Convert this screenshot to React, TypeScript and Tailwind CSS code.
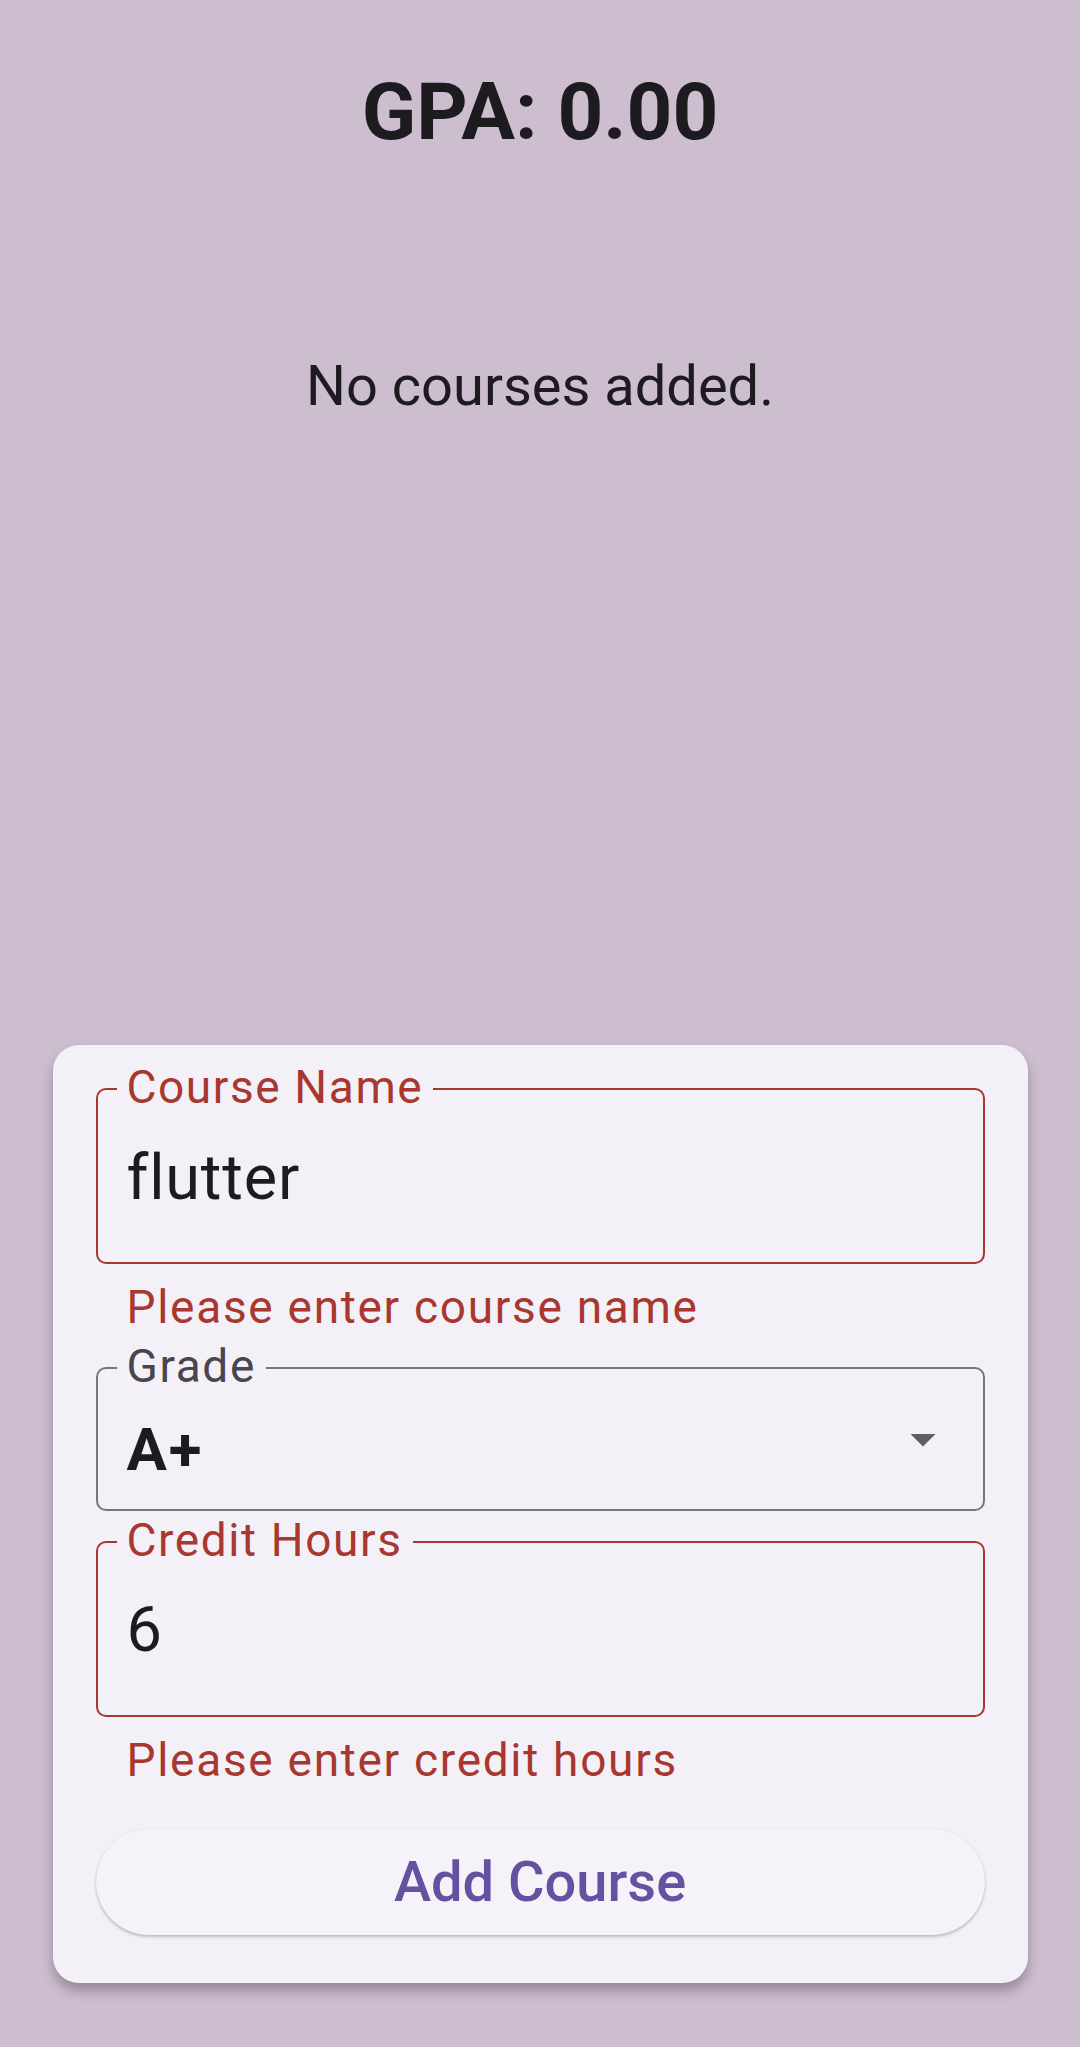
import React from "react";

// Outlined text field with floating label sitting on the border
function OutlinedField({
  label,
  tone = "error",
  className = "",
  children,
}: {
  label: string;
  tone?: "error" | "neutral";
  className?: string;
  children: React.ReactNode;
}) {
  const border = tone === "error" ? "border-[#a8382f]" : "border-[#79747e]";
  const labelColor = tone === "error" ? "text-[#a8382f]" : "text-[#49454f]";
  return (
    <div
      className={`relative flex items-center rounded-[10px] border-2 pl-[29px] pr-[30px] ${border} ${className}`}
    >
      <span
        className={`absolute left-[19px] top-[-26px] bg-[#f4f0f8] px-[10px] text-[46px] leading-none tracking-[1.6px] ${labelColor}`}
      >
        {label}
      </span>
      {children}
    </div>
  );
}

function ErrorText({ children }: { children: React.ReactNode }) {
  return (
    <p className="mt-[16px] pl-[31px] text-[46px] leading-[54px] tracking-[1.7px] text-[#a8382f]">
      {children}
    </p>
  );
}

export default function App() {
  return (
    <div className="flex h-[2047px] w-full flex-col items-center bg-[#ccbdcf] font-['Roboto',sans-serif] text-[#1d1b20]">
      {/* Header */}
      <h1 className="pt-[72px] text-[80px] font-bold leading-[80px]">GPA: 0.00</h1>

      {/* Empty list */}
      <p className="mt-[206px] text-[56px] leading-[56px]">No courses added.</p>

      {/* Add course form */}
      <div className="mb-[64px] mt-auto w-[975px] rounded-[26px] bg-[#f4f0f8] px-[43px] pb-[48px] pt-[43px] shadow-[0_8px_12px_rgba(60,40,60,0.35)]">
        <OutlinedField label="Course Name" className="h-[176px]">
          <span className="mt-[4px] text-[63px] tracking-[0.8px]">flutter</span>
        </OutlinedField>
        <ErrorText>Please enter course name</ErrorText>

        <OutlinedField label="Grade" tone="neutral" className="mt-[33px] h-[144px] justify-between">
          <span className="mt-[22px] text-[60px] font-bold leading-none tracking-[2px]">A+</span>
          <svg viewBox="0 0 24 24" className="h-[60px] w-[60px] fill-[#5f5f5f]">
            <path d="M7 10l5 5 5-5z" />
          </svg>
        </OutlinedField>

        <OutlinedField label="Credit Hours" className="mt-[30px] h-[176px]">
          <span className="mt-[2px] text-[63px] tracking-[0.8px]">6</span>
        </OutlinedField>
        <ErrorText>Please enter credit hours</ErrorText>

        <button className="mt-[42px] flex h-[106px] w-full items-center justify-center rounded-full bg-[#f6f2fa] text-[56px] font-medium text-[#63529f] shadow-[0_2px_3px_rgba(0,0,0,0.22),0_0_1px_rgba(0,0,0,0.12)]">
          Add Course
        </button>
      </div>
    </div>
  );
}
